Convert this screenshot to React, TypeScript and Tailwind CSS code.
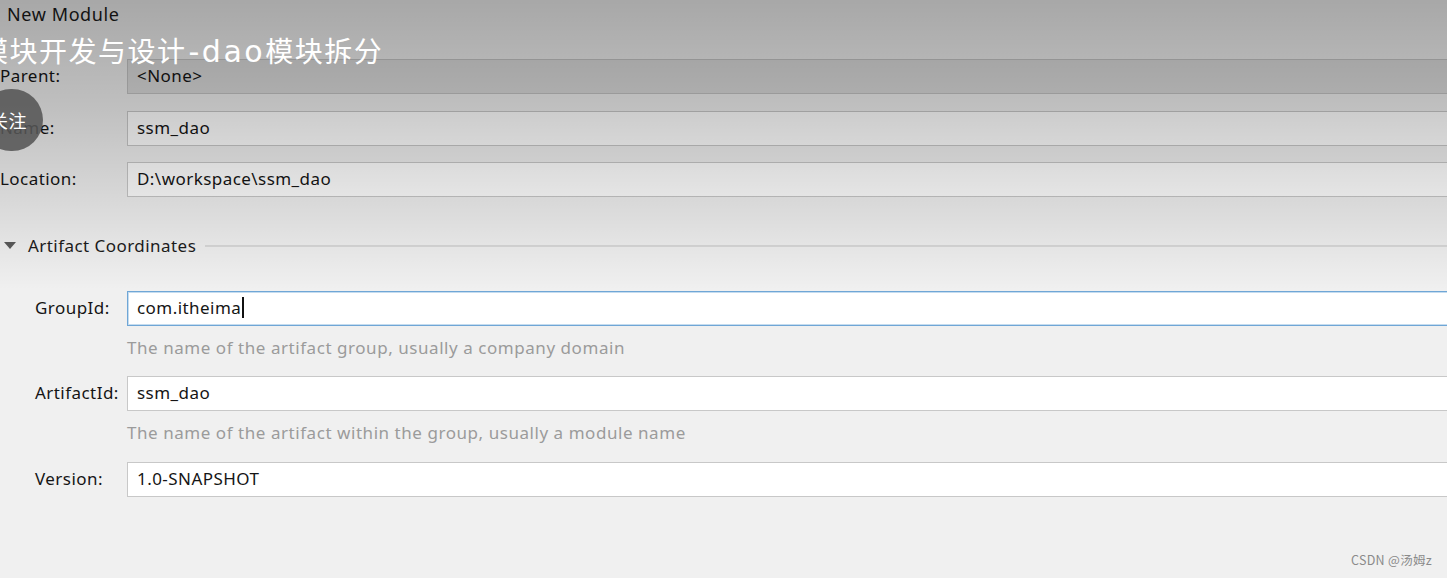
import React from "react";

const font = { fontFamily: '"Noto Sans", "Open Sans", Arial, sans-serif' };

function Field({ value, label, labelPad = "pl-0", parent = false, focused = false, cursor = false }: { value: string; label: string; labelPad?: string; parent?: boolean; focused?: boolean; cursor?: boolean }) {
  return (
    <div className="flex items-center h-[35px]">
      <div className={`w-[127px] shrink-0 text-[17px] text-[#151515] pb-[1px] ${labelPad}`}>{label}</div>
      <div
        className={`flex-1 h-full flex items-center pl-[9px] pb-[2px] text-[17px] text-[#151515] border ${
          focused ? "border-[#6fa6d6] bg-white shadow-[inset_0_0_0_1px_#c5dcef]" : parent ? "border-[#c4c4c4] bg-[#dcdcdc]" : "border-[#c8c8c8] bg-white"
        }`}
      >
        <span>{value}</span>
        {cursor && <span className="inline-block w-[1.5px] h-[21px] bg-[#111] ml-[1px]" />}
      </div>
    </div>
  );
}

export default function App() {
  return (
    <div className="relative w-[1447px] h-[578px] overflow-hidden bg-[#f0f0f0] tracking-[0.45px]" style={font}>
      <div className="w-[1470px] flex flex-col">
        <div className="h-[28px] pl-[7px] pt-[1px] text-[18px] text-[#1a1a1a] leading-[26px] tracking-[0.6px]">New Module</div>
        <div className="mt-[31px]">
          <Field label="Parent:" value="<None>" parent />
        </div>
        <div className="mt-[17px]">
          <Field label="Name:" value="ssm_dao" />
        </div>
        <div className="mt-[16px]">
          <Field label="Location:" value="D:\workspace\ssm_dao" />
        </div>
        <div className="mt-[39px] h-[20px] flex items-center">
          <svg width="12" height="8" viewBox="0 0 12 8" className="ml-[4px]">
            <polygon points="0,0 12,0 6,7" fill="#5a5a5a" />
          </svg>
          <span className="ml-[12px] text-[17px] text-[#1c1c1c]">Artifact Coordinates</span>
          <div className="ml-[9px] flex-1 h-[2px] bg-[#d9d9d9]" />
        </div>
        <div className="mt-[35px]">
          <Field label="GroupId:" value="com.itheima" labelPad="pl-[35px]" focused cursor />
        </div>
        <div className="mt-[11px] h-[22px] pl-[127px] text-[17px] text-[#9b9b9b] leading-[22px] tracking-[0.55px]">
          The name of the artifact group, usually a company domain
        </div>
        <div className="mt-[17px]">
          <Field label="ArtifactId:" value="ssm_dao" labelPad="pl-[35px]" />
        </div>
        <div className="mt-[11px] h-[22px] pl-[127px] text-[17px] text-[#9b9b9b] leading-[22px] tracking-[0.55px]">
          The name of the artifact within the group, usually a module name
        </div>
        <div className="mt-[18px]">
          <Field label="Version:" value="1.0-SNAPSHOT" labelPad="pl-[35px]" />
        </div>
      </div>

      <div className="absolute inset-0 pointer-events-none bg-[linear-gradient(to_bottom,rgba(0,0,0,0.3)_0px,rgba(0,0,0,0.2)_110px,rgba(0,0,0,0)_290px)]" />

      <div
        className="absolute left-[-20px] top-[30px] text-[28px] leading-[40px] text-white whitespace-nowrap tracking-[1.5px]"
        style={{ fontFamily: '"Noto Sans CJK SC", "Noto Sans", sans-serif' }}
      >
        模块开发与设计
        <span className="text-[30px] tracking-[2.5px] ml-[2px]" style={{ fontFamily: '"DejaVu Sans", "Noto Sans", sans-serif' }}>
          -dao
        </span>
        模块拆分
      </div>

      <div className="absolute left-[-20px] top-[89px] w-[63px] h-[62px] rounded-full bg-[rgba(85,85,85,0.88)]" />
      <div
        className="absolute left-[-10px] top-[108px] text-[18px] leading-[24px] text-white whitespace-nowrap"
        style={{ fontFamily: '"Noto Sans CJK SC", sans-serif' }}
      >
        关注
      </div>

      <div
        className="absolute right-[15px] bottom-[8px] text-[12.5px] text-[#8a8a8a] tracking-[0.3px]"
        style={{ fontFamily: '"Noto Sans CJK SC", "Noto Sans", sans-serif' }}
      >
        CSDN @汤姆z
      </div>
    </div>
  );
}
